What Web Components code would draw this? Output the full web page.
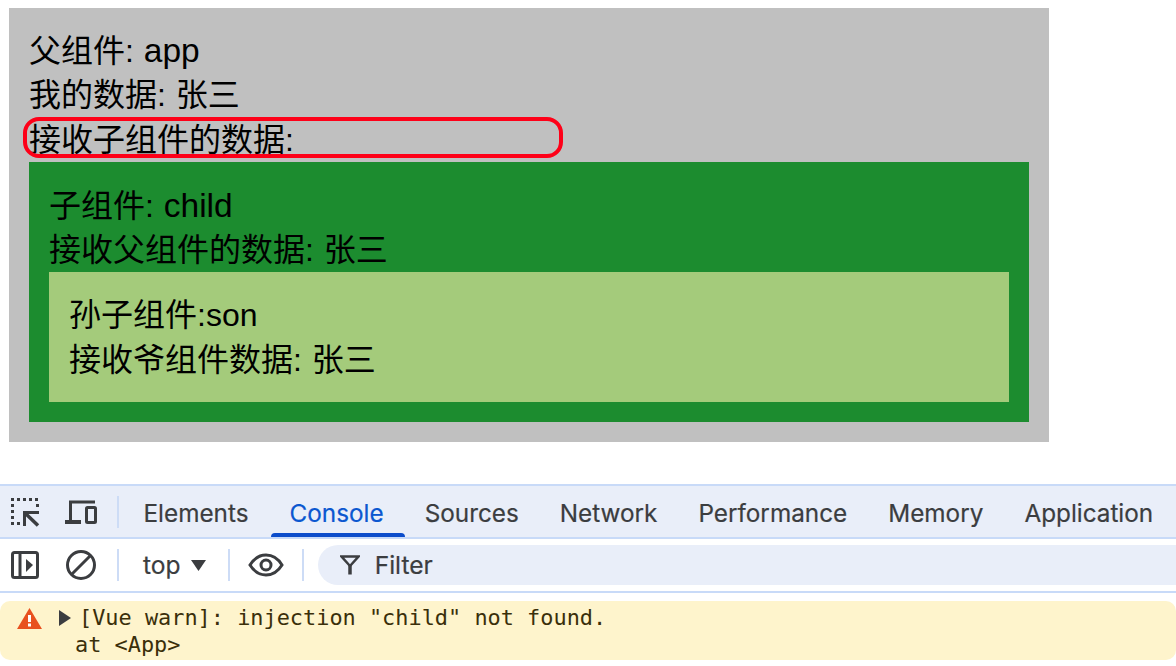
<!DOCTYPE html>
<html lang="zh">
<head>
<meta charset="utf-8">
<title>provide inject</title>
<style>
  html, body { margin: 0; background: #fff; }
  body { width: 1176px; height: 666px; overflow: hidden; }
</style>
</head>
<body>
<demo-page>
  <comp-box tone="#c0c0c0" style="margin: 8px 0 42px 9px; width: 1040px;">
    <text-line>父组件: <span>app</span></text-line>
    <text-line>我的数据: 张三</text-line>
    <text-line marked short>接收子组件的数据:</text-line>
    <comp-box tone="#1c8c2f">
      <text-line nested>子组件: <span>child</span></text-line>
      <text-line nested>接收父组件的数据: 张三</text-line>
      <comp-box tone="#a4cb7b">
        <text-line nested>孙子组件:son</text-line>
        <text-line nested>接收爷组件数据: 张三</text-line>
      </comp-box>
    </comp-box>
  </comp-box>
  <devtools-panel>
    <devtools-tabs></devtools-tabs>
    <console-toolbar></console-toolbar>
    <console-warning>
      <div>[Vue warn]: injection "child" not found.</div>
      <div class="stack">at &lt;App&gt;</div>
    </console-warning>
  </devtools-panel>
</demo-page>

<script>
class DemoPage extends HTMLElement {
  constructor() {
    super();
    this.attachShadow({ mode: 'open' }).innerHTML = `
      <style>
        :host { display: flex; flex-direction: column; font-family: "Liberation Sans", "Noto Sans CJK SC", sans-serif; }
      </style>
      <slot></slot>`;
  }
}

class CompBox extends HTMLElement {
  constructor() {
    super();
    this.attachShadow({ mode: 'open' }).innerHTML = `
      <style>
        :host { display: block; padding: 20px; box-sizing: border-box; color: #000; font-size: 32px; }
      </style>
      <slot></slot>`;
  }
  connectedCallback() {
    this.style.background = this.getAttribute('tone');
  }
}

class TextLine extends HTMLElement {
  constructor() {
    super();
    this.attachShadow({ mode: 'open' }).innerHTML = `
      <style>
        :host { display: block; height: 45px; line-height: 45px; position: relative; white-space: nowrap; word-spacing: 1px; }
        :host([short]) { height: 44px; }
        :host([nested]) { line-height: 47px; }
        ::slotted(span) { font-size: 33.500px; }
        .mark {
          display: none; position: absolute; left: -6px; top: -1px; width: 540px; height: 41px;
          box-sizing: border-box; border: 4px solid #fe0018; border-radius: 16px;
        }
        :host([marked]) .mark { display: block; }
      </style>
      <slot></slot><span class="mark"></span>`;
  }
}

class DevtoolsPanel extends HTMLElement {
  constructor() {
    super();
    this.attachShadow({ mode: 'open' }).innerHTML = `
      <style>
        :host { display: flex; flex-direction: column; font-family: Inter, "Liberation Sans", sans-serif; color: #3b3d40; }
      </style>
      <slot></slot>`;
  }
}

class DevtoolsTabs extends HTMLElement {
  constructor() {
    super();
    this.attachShadow({ mode: 'open' }).innerHTML = `
      <style>
        :host {
          display: flex; align-items: stretch; height: 51px; padding-left: 10px; overflow: hidden;
          background: #e9eef9; border-top: 2px solid #c8daf8; border-bottom: 2px solid #c8daf8;
          font-size: 24.300px; position: relative;
        }
        .icons { display: flex; align-items: center; flex: none; }
        svg { display: block; flex: none; }
        .sep { width: 2px; height: 32px; background: #cddcf6; margin: 0 24.500px 0 20px; align-self: center; flex: none; }
        .tab { display: flex; align-items: center; flex: none; margin-right: 41px; padding-top: 3px; position: relative; white-space: nowrap; -webkit-text-stroke: 0.200px currentColor; }
        .on { color: #0b57d0; }
        .on::after {
          content: ""; position: absolute; left: -19px; right: -21px; bottom: 0; height: 4px;
          background: #0b4ccb; border-radius: 4px 4px 0 0;
        }
      </style>
      <div class="icons">
        <svg width="30" height="30" viewBox="0 0 30 30" fill="#3b3d40">
          <path d="M1 1h3v3H1zM7 1h3v3H7zM13 1h3v3h-3zM19 1h3v3h-3zM25 1h3v3h-3zM26 7h3v3h-3zM1 7h3v3H1zM1 13h3v3H1zM1 19h3v3H1zM1 25h3v3H1zM7 25h3v3H7z"/>
          <path d="M29 15.500H14.500V29" fill="none" stroke="#3b3d40" stroke-width="3"/>
          <path d="M15.500 16.500L28 28.500" fill="none" stroke="#3b3d40" stroke-width="3.500"/>
        </svg>
        <svg width="32" height="24" viewBox="0 0 32 24" fill="none" stroke="#3b3d40" stroke-width="3" style="margin-left:25px">
          <path d="M30 2H5.500V22"/>
          <path d="M0 22h16" stroke-width="4"/>
          <rect x="21.500" y="7.500" width="9" height="15" rx="1"/>
        </svg>
      </div>
      <div class="sep"></div>
      <div class="tab">Elements</div>
      <div class="tab on">Console</div>
      <div class="tab">Sources</div>
      <div class="tab">Network</div>
      <div class="tab">Performance</div>
      <div class="tab">Memory</div>
      <div class="tab">Application</div>`;
  }
}

class ConsoleToolbar extends HTMLElement {
  constructor() {
    super();
    this.attachShadow({ mode: 'open' }).innerHTML = `
      <style>
        :host {
          display: flex; align-items: center; height: 52px; padding-left: 11px;
          background: #fff; border-bottom: 2px solid #c8daf8; font-size: 24.600px;
        }
        svg { display: block; flex: none; }
        .sep { width: 2px; height: 32px; background: #cddcf6; flex: none; }
        .context { display: flex; align-items: center; gap: 10px; }
        .filter {
          flex: 1; height: 40px; margin-left: 14px; padding-left: 22px; background: #e9eef9;
          border-radius: 20px 0 0 20px; display: flex; align-items: center; gap: 15px;
        }
        .filter span, .context { -webkit-text-stroke: 0.200px currentColor; }
      </style>
      <svg width="28" height="28" viewBox="0 0 28 28" fill="none" stroke="#3b3d40" stroke-width="3">
        <rect x="1.500" y="1.500" width="25" height="25" rx="2"/>
        <path d="M9 2v24"/>
        <path d="M15 8l7 6-7 7z" fill="#3b3d40" stroke="none"/>
      </svg>
      <svg width="30" height="30" viewBox="0 0 30 30" fill="none" stroke="#3b3d40" stroke-width="3" style="margin-left:27px">
        <circle cx="15" cy="15" r="13.500"/>
        <path d="M5.500 24.500l19-19"/>
      </svg>
      <div class="sep" style="margin:0 24px 0 21px"></div>
      <div class="context">top
        <svg width="15" height="11" viewBox="0 0 15 11" fill="#3b3d40"><path d="M0 0h15L7.500 11z"/></svg>
      </div>
      <div class="sep" style="margin:0 18px 0 22px"></div>
      <svg width="36" height="24" viewBox="0 0 36 24" fill="none" stroke="#3b3d40" stroke-width="3">
        <path d="M2 12C6 5.500 11.500 2 18 2s12 3.500 16 10c-4 6.500-9.500 10-16 10S6 18.500 2 12z"/>
        <circle cx="18" cy="12" r="5"/>
      </svg>
      <div class="sep" style="margin-left:18px"></div>
      <div class="filter">
        <svg width="20" height="20" viewBox="0 0 20 20" fill="none" stroke="#3b3d40" stroke-width="2.500">
          <path d="M1.500 1.500h17L10 11z"/>
          <path d="M10 10v9.500" stroke-width="3.500"/>
        </svg>
        <span>Filter</span>
      </div>`;
  }
}

class ConsoleWarning extends HTMLElement {
  constructor() {
    super();
    this.attachShadow({ mode: 'open' }).innerHTML = `
      <style>
        :host {
          display: flex; height: 59px; margin-top: 8px; background: #fef4cc; border-radius: 10px;
          color: #3a2f0a; font-family: "DejaVu Sans Mono", monospace; font-size: 21.900px; line-height: 27px;
          padding-left: 17px; box-sizing: border-box; padding-top: 3px;
        }
        svg { display: block; flex: none; }
        .warn { margin-top: 4px; }
        .arrow { margin: 6px 8px 0 17px; }
        ::slotted(.stack) { margin-left: -4px; }
      </style>
      <svg class="warn" width="25" height="21" viewBox="0 0 25 21">
        <path d="M12.500 0L25 21H0z" fill="#e8511f"/>
        <path d="M11 7h3v7h-3zM11 15.500h3v3h-3z" fill="#fff"/>
      </svg>
      <svg class="arrow" width="12" height="16" viewBox="0 0 12 16"><path d="M0 0l12 8L0 16z" fill="#3b3d40"/></svg>
      <div><slot></slot></div>`;
  }
}

customElements.define('demo-page', DemoPage);
customElements.define('comp-box', CompBox);
customElements.define('text-line', TextLine);
customElements.define('devtools-panel', DevtoolsPanel);
customElements.define('devtools-tabs', DevtoolsTabs);
customElements.define('console-toolbar', ConsoleToolbar);
customElements.define('console-warning', ConsoleWarning);
</script>
</body>
</html>
